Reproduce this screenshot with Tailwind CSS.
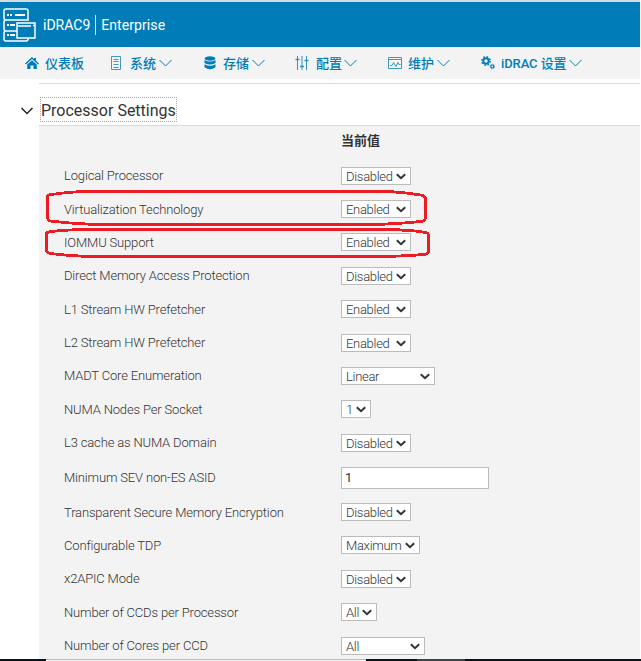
<!DOCTYPE html>
<html lang="zh"><head><meta charset="utf-8"><title>iDRAC9</title>
<script src="https://cdn.jsdelivr.net/npm/@tailwindcss/browser@4"></script></head>
<body class="w-[641px] h-[661px] overflow-hidden bg-white font-['Roboto','Noto_Sans_CJK_SC',sans-serif] text-[#333]">
<div class="relative flex h-full w-full flex-col pr-px">
<header class="flex h-[47px] shrink-0 items-center border-t-2 border-[#d4dade] bg-[#007db8] text-white">
<svg class="ml-[3px] mt-[2px] h-[35px] w-[34px] shrink-0" viewBox="0 0 34 35" fill="none" stroke="#fff" stroke-width="1.5"><path d="M25 13V3q0-2-2-2H3Q1 1 1 3v7q0 2 2 2h21M14 12H3q-2 0-2 2v7q0 2 2 2h11M14 23H3q-2 0-2 2v6q0 2 2 2h20q2 0 2-2v-1"/><path d="M14 15h18v15H14z"/><path d="M14 18h14M30 17.500h2"/><path d="M4 7h2M7 7h2M12 7h10M4 17h2M7 17h5M4 27h2M7 27h5" stroke-width="2"/></svg>
<span class="ml-[6px] text-[14px] leading-5 whitespace-nowrap">iDRAC9</span><span class="mx-[5px] mt-px h-5 w-px bg-white/80"></span><span class="text-[14px] leading-5 tracking-[0.08px] whitespace-nowrap">Enterprise</span>
</header>
<nav class="grid h-8 shrink-0 grid-cols-[85px_92px_92px_94px_92px_1fr] bg-[#f3f3f3] pl-[25px] text-[13px] font-medium text-[#007db8]">
<div class="flex items-center"><svg class="h-[14px] w-[14px]" viewBox="0 0 14 14" fill="currentColor"><path d="M7 1 0 7.5l1 1 6-5.4 6 5.4 1-1-3-2.800V2H9v1z"/><path d="M2.200 8.500 7 4.300l4.800 4.200V13H8.500V9.500h-3V13H2.200z"/></svg><span class="ml-[6px] pt-[2px] whitespace-nowrap">仪表板</span></div>
<div class="flex items-center"><svg class="h-[14px] w-[12px] opacity-75" viewBox="0 0 12 14" fill="none" stroke="currentColor"><path d="M1.500.5h9v13h-9zM3.500 3.500h5M3.500 5.500h5M3.500 8.500h5M3.500 11.500h5"/></svg><span class="ml-[8px] pt-[2px] whitespace-nowrap">系统</span><svg class="ml-[3px] h-[8px] w-[13px]" viewBox="0 0 13 8" fill="none" stroke="currentColor"><path d="m.5 1 6 6 6-6"/></svg></div>
<div class="flex items-center"><svg class="ml-[2px] h-[14px] w-[12px]" viewBox="0 0 12 14" fill="currentColor"><ellipse cx="6" cy="2.500" rx="5.500" ry="2.200"/><path d="M.5 4q5.500 3 11 0v3q-5.500 3-11 0zM.5 8.300q5.500 3 11 0v3q-5.500 4-11 0z"/></svg><span class="ml-[7px] pt-[2px] whitespace-nowrap">存储</span><svg class="ml-[3px] h-[8px] w-[13px]" viewBox="0 0 13 8" fill="none" stroke="currentColor"><path d="m.5 1 6 6 6-6"/></svg></div>
<div class="flex items-center"><svg class="ml-px h-[14px] w-[14px] opacity-80" viewBox="0 0 14 14" fill="none" stroke="currentColor"><path d="M2.500 0v14M7 0v14M11.500 0v14"/><path d="M.5 3.500h4M5 10.500h4M9.500 4.500h4" stroke-width="1.600"/></svg><span class="ml-[7px] pt-[2px] whitespace-nowrap">配置</span><svg class="ml-[2px] h-[8px] w-[13px]" viewBox="0 0 13 8" fill="none" stroke="currentColor"><path d="m.5 1 6 6 6-6"/></svg></div>
<div class="flex items-center"><svg class="h-[12px] w-[14px] opacity-75" viewBox="0 0 14 12" fill="none" stroke="currentColor"><path d="M.5.5h13v11H.5zM.5 2.500h13M2 8.500h2l1.500-3 2.500 4 2-4 1 2h1.500"/></svg><span class="ml-[6px] pt-[2px] whitespace-nowrap">维护</span><svg class="ml-[3px] h-[8px] w-[13px]" viewBox="0 0 13 8" fill="none" stroke="currentColor"><path d="m.5 1 6 6 6-6"/></svg></div>
<div class="flex items-center"><svg class="ml-px h-[14px] w-[14px]" viewBox="0 0 14 14" fill="none" stroke="currentColor"><circle cx="5" cy="5" r="2.700" stroke-width="2"/><circle cx="5" cy="5" r="4.300" stroke-width="1.400" stroke-dasharray="1.700 1.680"/><circle cx="11.300" cy="10.500" r="1.500" stroke-width="1.200"/><circle cx="11.300" cy="10.500" r="2.300" stroke-width=".8" stroke-dasharray="1 .8"/></svg><span class="ml-[6px] pt-[2px] tracking-[-0.1px] whitespace-nowrap">iDRAC 设置</span><svg class="ml-[3px] h-[8px] w-[13px]" viewBox="0 0 13 8" fill="none" stroke="currentColor"><path d="m.5 1 6 6 6-6"/></svg></div>
</nav>
<div class="ml-[39px] mt-1 h-px shrink-0 bg-[#d9d9d9]"></div>
<div class="mt-[13px] flex h-[25px] shrink-0 items-center"><svg class="ml-[21px] mt-[2px] h-2 w-3" viewBox="0 0 12 8" fill="none" stroke="#222" stroke-width="1.500"><path d="m.5 1 5.500 5.500 5.500-5.500"/></svg><h1 class="ml-[7px] flex h-[25px] w-[137px] items-center border border-dotted border-[#8cacE0] pt-[2px] text-[16px] whitespace-nowrap">Processor Settings</h1></div>
<main class="mt-[3px] ml-[39px] grow border-t border-[#d9d9d9] bg-[#f3f3f3]">
<div class="flex h-[33px] items-center pb-[3px] pl-[302px] text-[13px] font-bold text-[#333]">当前值</div>
<div id="rows"></div>
</main>
<div class="absolute bottom-0 left-0 flex h-[2px] w-full"><i class="w-[46px] bg-[#04141f]"></i><i class="w-[320px] border-t border-[#bbb] bg-[#f3f3f3]"></i><i class="w-[51px] bg-[#04141f]"></i><i class="w-12 bg-[#35454b]"></i><i class="grow bg-[#04141f]"></i></div>
<svg class="absolute top-0 left-0 h-[661px] w-[641px]" viewBox="0 0 641 661" fill="none" stroke="#ed1c24" stroke-width="2.800" shape-rendering="crispEdges"><path d="M83 191.500H389L406 193 421 195Q425.500 196 425.500 199V217Q425.500 221 421 221.500L404 223 378 224.500H94L70 223 50 221Q47.500 220 47.500 217V197Q47.500 195 51 194.500L67 192.500Z"/><path d="M80 229.500H394L415 231 426 232.500Q428.500 233 428.500 236V251Q428.500 254 424 254.500L410 255.500 387 256.500H87L65 255 50 253.500Q46.500 252 46.500 250V234Q46.500 232 51 231.500L61 230.500Z"/></svg>
</div>
<script>
// label, value, control width, row height, label baseline shift
const rows=[["Logical Processor","Disabled",70,33,0],["Virtualization Technology","Enabled",70,33,1],["IOMMU Support","Enabled",70,34,1],["Direct Memory Access Protection","Disabled",70,33,0],["L1 Stream HW Prefetcher","Enabled",70,34,1],["L2 Stream HW Prefetcher","Enabled",70,33,0],["MADT Core Enumeration","Linear",94,33,0],["NUMA Nodes Per Socket","1",30,34,1],["L3 cache as NUMA Domain","Disabled",70,33,0],["Minimum SEV non-ES ASID","1",148,36,2],["Transparent Secure Memory Encryption","Disabled",70,33,1],["Configurable TDP","Maximum",79,34,1],["x2APIC Mode","Disabled",70,33,0],["Number of CCDs per Processor","All",36,34,1],["Number of Cores per CCD","All",84,24,0]];
document.getElementById('rows').innerHTML=rows.map(([l,v,w,h,s])=>{const input=w===148;return `<div class="flex items-start pt-2 pl-[25px]" style="height:${h}px"><span class="w-[277px] shrink-0 text-[13px] leading-[18px] font-light tracking-[-0.16px] whitespace-nowrap" style="margin-top:${s}px">${l}</span><div class="flex shrink-0 items-center justify-between border border-[#bbb] bg-white text-[13px] leading-4 whitespace-nowrap ${input?'h-[22px] pl-[3px]':'h-[18px] pl-1 font-light tracking-[-0.3px]'}" style="width:${w}px"><span class="${input?'':'pt-[2px]'}">${v}</span>${input?'':'<svg class="mr-[4px] h-[7px] w-[10px] shrink-0" viewBox="0 0 10 7" fill="none" stroke="#333" stroke-width="2"><path d="m.8 1.200 4.200 4 4.200-4"/></svg>'}</div></div>`}).join('');
</script>
</body></html>
